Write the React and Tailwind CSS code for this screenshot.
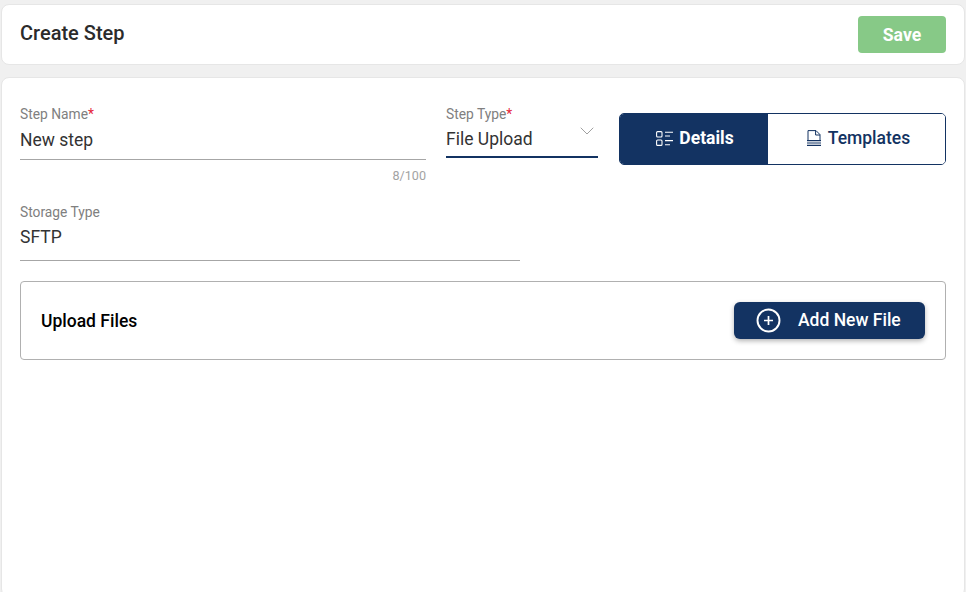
import { ChevronDown } from 'lucide-react'

function DetailsIcon() {
  return (
    <svg width="17" height="15" viewBox="0 0 17 15" fill="none" stroke="currentColor" strokeWidth="1.1">
      <rect x="0.6" y="0.6" width="5.4" height="5.4" rx="1" />
      <rect x="0.6" y="9" width="5.4" height="5.4" rx="1" />
      <path d="M9 1.2h8M9 5h5M9 9.6h8M9 13.8h5" />
    </svg>
  )
}

function TemplatesIcon() {
  return (
    <svg width="14" height="16" viewBox="0 0 14 16" fill="none" stroke="currentColor" strokeWidth="1">
      <path d="M1 10V0.6h8l4 4V10" />
      <path d="M8.6 0.6v4.4H13" />
      <path d="M0 10.7h14M0 13h14M0 15.3h14" strokeWidth="1.2" />
    </svg>
  )
}

function PlusCircleIcon() {
  return (
    <svg width="25" height="25" viewBox="0 0 25 25" fill="none" stroke="white">
      <circle cx="12.5" cy="12.5" r="11" strokeWidth="1.9" />
      <path d="M12.5 8v9M8 12.5h9" strokeWidth="1.7" />
    </svg>
  )
}

export default function App() {
  return (
    <div className="h-[592px] overflow-hidden bg-[#f0f0f0] px-px pt-1 font-['Roboto',sans-serif]">
      <div className="flex h-[61px] items-center justify-between rounded-lg border border-[#e6e6e6] bg-white px-[18px]">
        <h1 className="mb-[3px] text-xl font-medium text-[#2b2b2b]">Create Step</h1>
        <button className="h-[37px] w-[88px] rounded bg-[#87c987] pt-[2px] text-[17.6px] font-bold text-white">Save</button>
      </div>

      <div className="mt-3 h-[520px] rounded-lg border border-[#e6e6e6] bg-white px-[18px]">
        <div className="flex items-start pt-[22px]">
          <div className="w-[406px]">
            <label className="block h-[18px] text-[13.8px] leading-[28px] text-[#808080]">
              Step Name<span className="text-[#e5263a]">*</span>
            </label>
            <div className="h-[42px] border-b border-[#a6a6a6] pt-[10px] text-[17.5px] leading-6 text-[#333333]">New step</div>
            <div className="mt-2 text-right text-[12.6px] leading-4 text-[#a3a3a3]">8/100</div>
          </div>

          <div className="ml-5 w-[152px]">
            <label className="block h-[18px] text-[13.8px] leading-[28px] text-[#808080]">
              Step Type<span className="text-[#e5263a]">*</span>
            </label>
            <div className="flex h-[40px] items-start justify-between border-b-2 border-[#133362] pt-[9px] text-[17.5px] leading-6 text-[#333333]">
              <span>File Upload</span>
              <ChevronDown size={24} strokeWidth={1} className="mr-[-1px] mt-[-8px] text-[#a0a0a0]" />
            </div>
          </div>

          <div className="ml-[21px] mt-[13px] flex h-[52px] w-[327px] overflow-hidden rounded-[5px] border border-[#133362]">
            <button className="flex w-[148px] items-center justify-center gap-[6px] bg-[#133362] pb-[2px] pl-[2px] text-[17.5px] font-bold text-white">
              <DetailsIcon />
              Details
            </button>
            <button className="flex flex-1 items-center justify-center gap-[7px] bg-white pb-[2px] pl-1 text-[17.5px] font-medium text-[#133362]">
              <TemplatesIcon />
              Templates
            </button>
          </div>
        </div>

        <div className="mt-5 w-[500px] border-b border-[#a6a6a6] pb-[11px]">
          <label className="block text-[13.8px] leading-4 text-[#808080]">Storage Type</label>
          <div className="mt-[5px] text-[17.5px] leading-6 text-[#333333]">SFTP</div>
        </div>

        <div className="mt-5 flex h-[79px] items-center justify-between rounded border border-[#b0b0b0] px-5">
          <span className="pt-[2px] text-[17.5px] font-medium text-black">Upload Files</span>
          <button className="flex h-[37px] w-[191px] items-center gap-[17px] rounded-md bg-[#133362] pl-[22px] text-[17.5px] font-medium text-white shadow-[0_2px_5px_rgba(0,0,0,0.3)]">
            <PlusCircleIcon />
            Add New File
          </button>
        </div>
      </div>
    </div>
  )
}
